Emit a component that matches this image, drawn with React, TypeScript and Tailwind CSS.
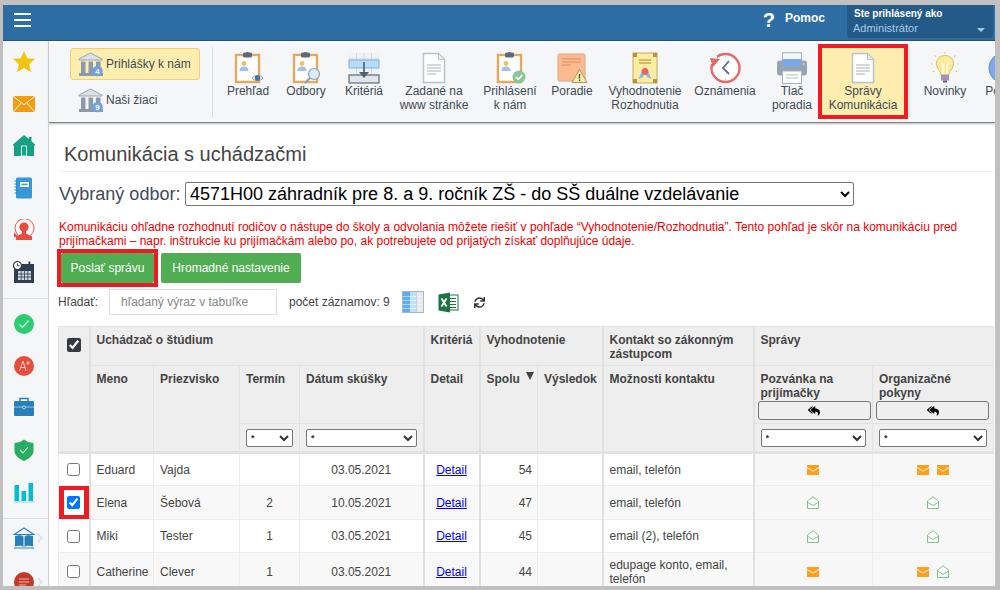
import type { ReactNode } from "react";
import { FaReplyAll, FaSync } from "react-icons/fa";

const font = "font-['Liberation_Sans',Arial,sans-serif]";

/* ---------- toolbar icons ---------- */

function Clipboard({ children }: { children?: ReactNode }) {
  return (
    <svg width="32" height="32" viewBox="0 0 32 32">
      <rect x="4" y="3" width="23" height="27" fill="#fff" stroke="#e3a862" strokeWidth="2.4" />
      <rect x="11" y="0.5" width="9" height="5" rx="1.5" fill="#5c6a7a" />
      <circle cx="15.5" cy="1.5" r="1.4" fill="#5c6a7a" />
      <circle cx="12" cy="11.5" r="2.4" fill="#f3c25f" />
      <path d="M7.5 19c0-3.5 2-4.6 4.5-4.6s4.5 1.1 4.5 4.6z" fill="#9cc4ef" />
      {children}
    </svg>
  );
}

function Page() {
  return (
    <svg width="32" height="32" viewBox="0 0 32 32">
      <path d="M5.5 1.5h15l6 6v23h-21z" fill="#fff" stroke="#b9c3cd" strokeWidth="1.5" />
      <path d="M20.5 1.5v6h6z" fill="#e8ecf0" stroke="#b9c3cd" strokeWidth="1" />
      <path d="M9 13h14M9 16h14M9 19h14M9 22h9" stroke="#a9b2bb" strokeWidth="1.2" />
    </svg>
  );
}

function Kriteria() {
  return (
    <svg width="32" height="32" viewBox="0 0 32 32">
      <rect x="1" y="1" width="30" height="30" fill="#eef2f5" />
      <path d="M1 7h30M8.5 1v30M16 1v30M23.5 1v30" stroke="#cfd7de" strokeWidth="1" />
      <rect x="1" y="8" width="30" height="8" fill="#b5dcfb" stroke="#8db0cf" />
      <rect x="1" y="23" width="30" height="8" fill="#dfe6ec" stroke="#5f6c78" strokeWidth="1.2" />
      <path d="M16 10v14" stroke="#515d69" strokeWidth="1.6" />
      <path d="M11 20h10l-5 6z" fill="#515d69" />
    </svg>
  );
}

function Poradie() {
  return (
    <svg width="32" height="32" viewBox="0 0 32 32">
      <rect x="2" y="2" width="27" height="27" rx="1.5" fill="#fdb98f" stroke="#e0a484" />
      <path d="M6 7h19M6 10h19M6 13h9" stroke="#d98d5f" strokeWidth="1.2" />
      <path d="M23.5 17.5l7.5 13H16z" fill="#fdeeb0" stroke="#a7975c" />
      <path d="M23.5 22v4.5M23.5 27.5v1.4" stroke="#4d4a3d" strokeWidth="1.4" />
    </svg>
  );
}

function Certificate() {
  return (
    <svg width="32" height="32" viewBox="0 0 32 32">
      <rect x="4" y="1" width="24" height="30" fill="#fdeda3" stroke="#c6a862" />
      <path d="M4 1h4v4H4zM24 1h4v4h-4zM4 27h4v4H4zM24 27h4v4h-4z" fill="#b89344" />
      <path d="M10 8h12M10 11h12" stroke="#c9a94f" strokeWidth="1.3" />
      <path d="M12.5 20l-3 7 4-1.5 2.5-4zM19.5 20l3 7-4-1.5-2.5-4z" fill="#8db9e8" />
      <circle cx="16" cy="19.5" r="3.4" fill="#e8656a" />
    </svg>
  );
}

function ClockBack() {
  return (
    <svg width="32" height="32" viewBox="0 0 32 32">
      <circle cx="16.5" cy="16" r="14" fill="#fff" stroke="#e36a6a" strokeWidth="2.4" />
      <rect x="1" y="4" width="7" height="8" fill="#f4f6f8" />
      <path d="M1 6l10 1-7 8z" fill="#e36a6a" />
      <path d="M20 9l-6 7 6 6" fill="none" stroke="#5d6f82" strokeWidth="1.8" />
      <path d="M16.5 4v1.5M16.5 26.5V28M27 16h1.5" stroke="#c8cfd6" strokeWidth="1" />
    </svg>
  );
}

function Printer() {
  return (
    <svg width="32" height="32" viewBox="0 0 32 32">
      <rect x="6.5" y="0.7" width="19" height="10" fill="#f4f6f8" stroke="#a7b2bd" />
      <rect x="1" y="8.5" width="30" height="15" rx="3" fill="#96a4b2" />
      <rect x="6.5" y="7" width="19" height="7" rx="1" fill="#7aa8e8" />
      <rect x="6.5" y="19" width="19" height="12.5" fill="#fff" stroke="#a7b2bd" />
      <path d="M10 23h12M10 26h12" stroke="#b5bec7" strokeWidth="1.1" />
      <circle cx="27.5" cy="12" r="1" fill="#f3d28a" />
    </svg>
  );
}

function Bulb() {
  return (
    <svg width="32" height="32" viewBox="0 0 32 32">
      <path d="M16 3.5c-5.2 0-8.6 3.8-8.6 8.2 0 4.4 3.9 6.6 4.6 11h8c.7-4.4 4.6-6.6 4.6-11 0-4.4-3.4-8.2-8.6-8.2z" fill="#fdeb9b" stroke="#d9bf63" />
      <path d="M14 22V13l-2-2M18 22V13l2-2" fill="none" stroke="#fff" strokeWidth="1.3" />
      <rect x="12" y="23" width="8" height="5.5" fill="#a68fc4" />
      <rect x="14" y="28.5" width="4" height="2" fill="#6a5a82" />
      <path d="M16 0v1.6M5.5 3.5l1.2 1.2M26.5 3.5l-1.2 1.2M2 12h1.6M28.4 12H30M4 20l1.2-1M28 20l-1.2-1" stroke="#dcc56d" strokeWidth="1.1" />
    </svg>
  );
}

function RoundBlue() {
  return (
    <svg width="32" height="32" viewBox="0 0 32 32">
      <circle cx="16" cy="16" r="15" fill="#7fa9e8" stroke="#5f88c4" />
    </svg>
  );
}

function Bank({ count }: { count: number }) {
  return (
    <svg width="26" height="25" viewBox="0 0 26 25" className="shrink-0">
      <path d="M12.5 1L24 7v1H1V7z" fill="#dbe1e7" stroke="#9aa7b4" />
      <path d="M3 9.500h4.500V21H3zM10.500 9.500H15V21h-4.500zM18 9.500h4.500V21H18z" fill="#8c99a7" />
      <rect x="1" y="21" width="24" height="3" fill="#8c99a7" />
      <circle cx="19.500" cy="19" r="5.200" fill="#6f9fe6" />
      <text x="19.500" y="21.800" textAnchor="middle" fontSize="8" fontWeight="700" fill="#fff" fontFamily="Liberation Sans">
        {count}
      </text>
    </svg>
  );
}

function TableCols() {
  return (
    <svg width="22" height="22" viewBox="0 0 22 22">
      <rect x="0.5" y="0.5" width="21" height="21" fill="#e7ecf0" stroke="#a9b6c2" />
      <rect x="1" y="1" width="7" height="20" fill="#5aaef5" />
      <rect x="8" y="1" width="6" height="20" fill="#bfe0fb" />
      <path d="M1 5.500h20M1 9.500h20M1 13.500h20M1 17.500h20" stroke="#fff" strokeWidth="0.7" opacity="0.7" />
      <path d="M14.500 1v20" stroke="#c6d0d8" />
    </svg>
  );
}

function Excel() {
  return (
    <svg width="21" height="21" viewBox="0 0 21 21">
      <rect x="10" y="3" width="10" height="15" fill="#fff" stroke="#217346" />
      <path d="M12 6.500h6M12 9.500h6M12 12.500h6M12 15.500h6" stroke="#217346" strokeWidth="1.2" />
      <path d="M0.500 2.500L12 0.500v20l-11.500-2z" fill="#217346" />
      <path d="M3.500 6.500l5 8M8.500 6.500l-5 8" stroke="#fff" strokeWidth="1.7" />
    </svg>
  );
}

/* ---------- sidebar icons ---------- */

const sideTop = [
  <path key="star" d="M11 0l3.300 7.300 7.700.8-5.800 5.200 1.700 7.800L11 17.100l-6.900 4 1.700-7.800L0 8.100l7.700-.8z" fill="#f1c40f" />,
  <g key="mail">
    <rect y="3" width="22" height="16" fill="#f39c12" />
    <path d="M0 3l11 9 11-9M0 19l8-9M22 19l-8-9" fill="none" stroke="#fff" strokeWidth="0.9" />
  </g>,
  <g key="home">
    <path d="M11 0l5 4V2h2.500v4.200L22 9.500v1.200h-1V21H1V10.700H0V9.500z" fill="#16a085" />
    <rect x="8.500" y="11" width="5" height="10" fill="#16a085" stroke="#d5f3ec" />
  </g>,
  <g key="notebook">
    <rect x="3" y="0.500" width="16" height="21" rx="1.500" fill="#3498db" />
    <rect x="7" y="5" width="9" height="5" fill="#fff" />
    <rect x="8.500" y="6.700" width="6" height="1.400" fill="#3498db" />
    <path d="M1.500 4h3M1.500 7h3M1.500 10h3M1.500 13h3M1.500 16h3" stroke="#2c7fb8" strokeWidth="1" />
  </g>,
  <g key="person">
    <path d="M5 16A9.500 9.500 0 1 1 17.500 16.500" fill="none" stroke="#e74c3c" strokeWidth="0.9" />
    <circle cx="11" cy="8" r="4.600" fill="#e74c3c" />
    <path d="M9 12h4v2.500l6 3V21H3v-3.500l6-3z" fill="#e74c3c" />
    <path d="M1 13.500l4 3.500-4 1.500z" fill="#e74c3c" />
  </g>,
  <g key="calendar">
    <rect x="1" y="3" width="20" height="19" fill="#2c3e50" />
    <rect x="5" y="10" width="13" height="9" fill="#cfd6dc" />
    <path d="M5 13h13M5 16h13M8.200 10v9M11.500 10v9M14.800 10v9" stroke="#2c3e50" strokeWidth="0.8" />
    <rect x="15.500" y="0.500" width="1.800" height="4.500" fill="#2c3e50" />
    <circle cx="4.500" cy="4.500" r="4" fill="#fff" stroke="#2c3e50" strokeWidth="1.200" />
    <path d="M4.500 2.500v2.200h2" fill="none" stroke="#2c3e50" strokeWidth="0.900" />
  </g>,
];

const sideMid = [
  <g key="check">
    <circle cx="11" cy="11" r="10" fill="#2ecc71" />
    <path d="M6.500 11.500l3 3 6-7" fill="none" stroke="#d9f7e6" strokeWidth="1.200" />
  </g>,
  <g key="grade">
    <circle cx="11" cy="11" r="10" fill="#e74c3c" />
    <path d="M6.500 16L10 6l3 10M7.700 12.500h4.600M15 6v4M13 8h4" fill="none" stroke="#fbdad6" strokeWidth="0.900" />
  </g>,
  <g key="case">
    <path d="M7 4V1.500h8V4" fill="none" stroke="#2980b9" strokeWidth="1.500" />
    <rect x="1" y="4" width="20" height="15" rx="1" fill="#2980b9" />
    <path d="M1 10h20" stroke="#a5cde8" strokeWidth="0.900" />
    <circle cx="11" cy="10.500" r="1.500" fill="#2980b9" stroke="#d2e6f3" strokeWidth="0.800" />
  </g>,
  <g key="shield">
    <path d="M11 0.500l4 2.500 5.500 1V12c0 4.500-5 8-9.500 10C6.500 20 1.500 16.500 1.500 12V4L7 3z" fill="#27ae60" />
    <path d="M7 11l3 3 5-6" fill="none" stroke="#d9f7e6" strokeWidth="1.100" />
  </g>,
  <g key="bars">
    <rect x="1.500" y="4" width="4.500" height="16" fill="#00bcd4" />
    <rect x="8.500" y="10" width="4.500" height="10" fill="#00bcd4" />
    <rect x="15.500" y="2" width="4.500" height="18" fill="#00bcd4" />
    <path d="M0.500 21h21" stroke="#7fdde9" />
  </g>,
];

function SideIcon({ children, chevron }: { children: ReactNode; chevron?: boolean }) {
  return (
    <div className="relative flex h-full items-center pl-[10px]">
      <svg width="22" height="22" viewBox="0 0 22 22">
        {children}
      </svg>
      {chevron && (
        <svg width="6" height="10" viewBox="0 0 6 10" className="absolute right-[5px] top-1/2 -translate-y-1/2">
          <path d="M1 1l4 4-4 4" fill="none" stroke="#d6d6d6" strokeWidth="1.200" />
        </svg>
      )}
    </div>
  );
}

function Sidebar() {
  return (
    <aside className="w-[46px] shrink-0 border-r border-[#cfcfcf] bg-[#f5f6f8]">
      <div className="border-b border-[#dfdfdf] pb-[5px]">
        {sideTop.map((icon, i) => (
          <div key={i} className="h-[42px]">
            <SideIcon>{icon}</SideIcon>
          </div>
        ))}
      </div>
      <div className="border-b border-[#dfdfdf] pb-[5px] pt-[4px]">
        {sideMid.map((icon, i) => (
          <div key={i} className="h-[42px]">
            <SideIcon>{icon}</SideIcon>
          </div>
        ))}
      </div>
      <div className="h-[38px]">
        <SideIcon chevron>
          <path d="M11 1L1 7.500h20z" fill="none" stroke="#2980b9" strokeWidth="1.100" />
          <path d="M2 9c3-1 7-1 8.500.5V20C9 18.500 5 18.500 2 19.500zM20 9c-3-1-7-1-8.500.5V20c1.500-1.500 5.500-1.500 8.500-.5z" fill="#2980b9" />
          <path d="M1 21h20" stroke="#2980b9" />
        </SideIcon>
      </div>
      <div className="mt-[4px] h-[42px]">
        <SideIcon chevron>
          <circle cx="11" cy="11" r="10" fill="#c0392b" />
          <path d="M6 8h10M6 11h10M6 14h7" stroke="#eab5ae" strokeWidth="1.200" />
        </SideIcon>
      </div>
    </aside>
  );
}

/* ---------- toolbar ---------- */

const tools = [
  {
    lines: ["Prehľad"],
    w: "w-[60px]",
    icon: (
      <Clipboard>
        <path d="M20 26c2.500-3.500 8.500-3.500 11 0-2.500 3.500-8.500 3.500-11 0z" fill="#fff" stroke="#7d8b99" strokeWidth="0.800" />
        <circle cx="25.500" cy="26" r="2.800" fill="#3f77ad" />
      </Clipboard>
    ),
  },
  {
    lines: ["Odbory"],
    w: "w-[56px]",
    icon: (
      <Clipboard>
        <circle cx="24" cy="22" r="5.500" fill="#d9eefc" stroke="#8aa0b4" strokeWidth="1.200" />
        <path d="M20 26l-5 5" stroke="#8aa0b4" strokeWidth="2.200" />
      </Clipboard>
    ),
  },
  { lines: ["Kritériá"], w: "w-[60px]", icon: <Kriteria /> },
  { lines: ["Zadané na", "www stránke"], w: "w-[80px]", icon: <Page /> },
  {
    lines: ["Prihlásení", "k nám"],
    w: "w-[72px]",
    icon: (
      <Clipboard>
        <circle cx="25" cy="25" r="6.500" fill="#8cc49a" />
        <path d="M22 25l2.300 2.300 4-4.300" fill="none" stroke="#fff" strokeWidth="1.600" />
      </Clipboard>
    ),
  },
  { lines: ["Poradie"], w: "w-[52px]", icon: <Poradie /> },
  { lines: ["Vyhodnotenie", "Rozhodnutia"], w: "w-[94px]", icon: <Certificate /> },
  { lines: ["Oznámenia"], w: "w-[66px]", icon: <ClockBack /> },
  { lines: ["Tlač", "poradia"], w: "ml-[8px] w-[52px]", icon: <Printer /> },
  { lines: ["Správy", "Komunikácia"], w: "w-[90px]", active: true, icon: <Page /> },
  { lines: ["Novinky"], w: "ml-[13px] w-[58px]", divider: true, icon: <Bulb /> },
  { lines: ["Pomoc"], w: "w-[60px]", icon: <RoundBlue /> },
];

function Toolbar() {
  return (
    <div className="mt-[2px] flex h-[80px] shrink-0 overflow-hidden border-b border-[#808080] bg-[#f4f6f8] text-[12px] leading-[14px] text-[#3f4a56] shadow-[0_1px_2px_#bbb]">
      <div className="ml-[21px] mt-[5px] flex w-[130px] shrink-0 flex-col gap-[4px]">
        <div className="flex h-[32px] items-center gap-[2px] rounded-[3px] border border-[#f5cf6b] bg-[#fdeeb0] pl-[7px]">
          <Bank count={4} />
          <span>Prihlášky k nám</span>
        </div>
        <div className="flex h-[32px] items-center gap-[2px] border border-transparent pl-[7px]">
          <Bank count={9} />
          <span>Naši žiaci</span>
        </div>
      </div>
      <div className="ml-[12px] mr-[5px] mt-[4px] h-[70px] w-px shrink-0 bg-[#dcdcdc]" />
      {tools.map((t) => (
        <div key={t.lines[0]} className="contents">
          {t.divider && <div className="ml-[1px] mr-[-7px] mt-[4px] h-[70px] w-px shrink-0 bg-[#e2e2e2]" />}
          <div
            className={`mt-[1px] flex h-[75px] shrink-0 flex-col items-center whitespace-nowrap border-4 pt-[4px] text-center ${t.w} ${
              t.active ? "border-[#ed1c24] bg-[#fdeeb0]" : "border-transparent"
            }`}
          >
            <div className="flex h-[32px] justify-center">{t.icon}</div>
            {t.lines.map((l) => (
              <div key={l}>{l}</div>
            ))}
          </div>
        </div>
      ))}
    </div>
  );
}

/* ---------- table ---------- */

const th = "border border-[#e2e2e2] bg-[#eeeeee] px-[6px] pt-[6px] text-left align-top font-bold text-[#444]";
const selectCell = "border border-[#e2e2e2] border-b-[3px] bg-[#eeeeee] px-[6px] align-middle";
const td = "border border-[#ececec] px-[6px] text-[#444]";
const group = "border-r-2 border-r-[#e0e0e0]";

function MiniSelect() {
  return (
    <select className="block h-[18px] w-full rounded-[2px] border border-[#767676] bg-white text-[9px] text-[#333]">
      <option>*</option>
    </select>
  );
}

function ReplyButton() {
  return (
    <button className="-mx-[3px] mt-[1px] mb-[3px] flex h-[19px] w-[113px] items-center justify-center rounded-[3px] border border-[#767676] bg-[#efefef] text-black">
      <FaReplyAll size={12} />
    </button>
  );
}

function Closed() {
  return (
    <svg width="12" height="10" viewBox="0 0 12 10">
      <rect width="12" height="10" fill="#ff9f1c" />
      <path d="M0 2.500l6 3.500 6-3.500" fill="none" stroke="#fff" strokeWidth="0.900" />
    </svg>
  );
}

function Opened() {
  return (
    <svg width="12" height="13" viewBox="0 0 12 13">
      <path d="M0.500 5L6 0.700 11.500 5v7.500H0.500z" fill="#fff" stroke="#6fbd7f" strokeWidth="0.900" />
      <path d="M1 6.500l5 3 5-3" fill="none" stroke="#6fbd7f" strokeWidth="0.900" />
    </svg>
  );
}

type Row = {
  meno: string;
  priezvisko: string;
  termin: string;
  datum: string;
  spolu: number;
  kontakt: string;
  pozvanka: ReactNode;
  pokyny: ReactNode;
  checked?: boolean;
  tall?: boolean;
};

const rows: Row[] = [
  { meno: "Eduard", priezvisko: "Vajda", termin: "", datum: "03.05.2021", spolu: 54, kontakt: "email, telefón", pozvanka: <Closed />, pokyny: <><Closed /><Closed /></> },
  { meno: "Elena", priezvisko: "Šebová", termin: "2", datum: "10.05.2021", spolu: 47, kontakt: "email, telefón", pozvanka: <Opened />, pokyny: <Opened />, checked: true },
  { meno: "Miki", priezvisko: "Tester", termin: "1", datum: "03.05.2021", spolu: 45, kontakt: "email (2), telefón", pozvanka: <Opened />, pokyny: <Opened /> },
  { meno: "Catherine", priezvisko: "Clever", termin: "1", datum: "03.05.2021", spolu: 44, kontakt: "edupage konto, email, telefón", pozvanka: <Closed />, pokyny: <><Closed /><Opened /></>, tall: true },
];

function ApplicantsTable() {
  return (
    <table className="-ml-px w-[935px] shrink-0 table-fixed border-collapse text-[12px] leading-[14px]">
      <colgroup>
        {[31, 64, 86, 60, 124, 56, 58, 65, 151, 119, 121].map((w, i) => (
          <col key={i} style={{ width: w }} />
        ))}
      </colgroup>
      <thead>
        <tr className="h-[39px]">
          <th rowSpan={3} className={`${th} ${group} border-b-[3px]`}>
            <div className="-mx-[6px] flex justify-center">
              <input type="checkbox" defaultChecked className="mt-[5px] h-[14px] w-[14px] accent-[#343a40]" />
            </div>
          </th>
          <th colSpan={4} className={`${th} ${group}`}>Uchádzač o štúdium</th>
          <th className={`${th} ${group}`}>Kritériá</th>
          <th colSpan={2} className={`${th} ${group}`}>Vyhodnotenie</th>
          <th className={`${th} ${group}`}>Kontakt so zákonným zástupcom</th>
          <th colSpan={2} className={th}>Správy</th>
        </tr>
        <tr className="h-[57px]">
          <th rowSpan={2} className={`${th} border-b-[3px]`}>Meno</th>
          <th rowSpan={2} className={`${th} border-b-[3px]`}>Priezvisko</th>
          <th className={th}>Termín</th>
          <th className={`${th} ${group}`}>Dátum skúšky</th>
          <th rowSpan={2} className={`${th} ${group} border-b-[3px]`}>Detail</th>
          <th rowSpan={2} className={`${th} border-b-[3px]`}>
            <div className="-mr-[3px] flex justify-between">
              <span>Spolu</span>
              <span className="h-0 w-0 border-x-[4.500px] border-t-[8px] border-x-transparent border-t-[#444]" />
            </div>
          </th>
          <th rowSpan={2} className={`${th} ${group} border-b-[3px]`}>Výsledok</th>
          <th rowSpan={2} className={`${th} ${group} border-b-[3px]`}>Možnosti kontaktu</th>
          <th className={th}>
            Pozvánka na prijímačky
            <ReplyButton />
          </th>
          <th className={th}>
            Organizačné pokyny
            <ReplyButton />
          </th>
        </tr>
        <tr className="h-[29px]">
          <th className={selectCell}><MiniSelect /></th>
          <th className={`${selectCell} ${group}`}><MiniSelect /></th>
          <th className={selectCell}><MiniSelect /></th>
          <th className={selectCell}><MiniSelect /></th>
        </tr>
      </thead>
      <tbody>
        {rows.map((r, i) => (
          <tr key={r.meno} className={`${r.tall ? "h-[38px]" : "h-[33px]"} ${i % 2 ? "bg-[#f8f8f8]" : "bg-white"}`}>
            <td className={`border border-[#ececec] p-0 ${group}`}>
              {r.checked ? (
                <div className="flex h-[33px] items-center justify-center border-x-[5px] border-y-4 border-[#ed1c24] bg-white">
                  <input type="checkbox" defaultChecked className="block" />
                </div>
              ) : (
                <div className="flex items-center justify-center">
                  <input type="checkbox" className="block" />
                </div>
              )}
            </td>
            <td className={td}>{r.meno}</td>
            <td className={td}>{r.priezvisko}</td>
            <td className={`${td} text-center`}>{r.termin}</td>
            <td className={`${td} ${group} text-center`}>{r.datum}</td>
            <td className={`${td} ${group} text-center`}>
              <a href="#detail" className="text-[#0000ee] underline">Detail</a>
            </td>
            <td className={`${td} pr-[5px] text-right`}>{r.spolu}</td>
            <td className={`${td} ${group}`} />
            <td className={`${td} ${group}`}>{r.kontakt}</td>
            <td className={`${td} bg-[#f7f7f7]`}>
              <div className="flex items-center justify-center gap-2">{r.pozvanka}</div>
            </td>
            <td className={`${td} bg-[#f7f7f7]`}>
              <div className="flex items-center justify-center gap-2">{r.pokyny}</div>
            </td>
          </tr>
        ))}
      </tbody>
    </table>
  );
}

/* ---------- page ---------- */

export default function App() {
  return (
    <div className={`h-[590px] w-[1000px] overflow-hidden bg-[#c0c0c0] pl-[3px] pt-[5px] ${font}`}>
      <div className="flex h-[581px] w-[992px] flex-col overflow-hidden bg-white">
        <header className="flex h-[36px] shrink-0 items-start border-b border-[#1c5582] bg-[#2d6da3] text-white">
          <div className="ml-[11px] mt-[8px] flex w-[17px] flex-col gap-[4px]">
            <span className="h-[2px] bg-white" />
            <span className="h-[2px] bg-white" />
            <span className="h-[2px] bg-white" />
          </div>
          <div className="ml-auto mt-[4px] flex items-center">
            <span className="text-[20px] font-bold leading-[22px]">?</span>
            <span className="mb-[4px] ml-[10px] text-[12px] font-bold">Pomoc</span>
          </div>
          <div className="relative ml-[22px] mr-[2px] h-[33px] w-[146px] rounded-b-[3px] bg-[#235a87] pl-[7px] pt-[2px]">
            <div className="text-[10px] font-bold leading-[14px]">Ste prihlásený ako</div>
            <div className="-ml-px text-[11px] leading-[14px] text-[#a5cbeb]">Administrátor</div>
            <span className="absolute bottom-[6px] right-[8px] h-0 w-0 border-x-[4px] border-t-[4px] border-x-transparent border-t-[#a5cbeb]" />
          </div>
        </header>
        <div className="flex min-h-0 flex-1">
          <Sidebar />
          <main className="flex min-w-0 flex-1 flex-col">
            <Toolbar />
            <div className="flex min-h-0 flex-1 flex-col pl-[10px] pr-[2px]">
              <h1 className="h-[49px] shrink-0 border-b border-[#eeeeee] pl-[5px] pt-[19px] text-[20px] font-normal leading-[24px] text-[#444]">
                Komunikácia s uchádzačmi
              </h1>
              <div className="mt-[10px] flex h-[24px] shrink-0 items-center text-[18px] text-[#3f4a56]">
                <span className="w-[126px] whitespace-nowrap">Vybraný odbor:</span>
                <select className="h-[24px] w-[669px] rounded-[2px] border border-[#767676] bg-white text-[18px] text-black">
                  <option>4571H00 záhradník pre 8. a 9. ročník ZŠ - do SŠ duálne vzdelávanie</option>
                </select>
              </div>
              <p className="mt-[14px] shrink-0 whitespace-nowrap text-[12px] leading-[14px] text-[#f00000]">
                Komunikáciu ohľadne rozhodnutí rodičov o nástupe do školy a odvolania môžete riešiť v pohľade “Vyhodnotenie/Rozhodnutia”. Tento pohľad je skôr na komunikáciu pred
                <br />
                prijímačkami – napr. inštrukcie ku prijímačkám alebo po, ak potrebujete od prijatých získať doplňujúce údaje.
              </p>
              <div className="-ml-[2px] mt-[1px] flex shrink-0 items-center text-[12px] text-white">
                <div className="border-4 border-[#ed1c24]">
                  <button className="block h-[30px] w-[93px] rounded-[2px] bg-[#51ad54]">Poslať správu</button>
                </div>
                <button className="ml-[3px] h-[30px] w-[140px] rounded-[2px] bg-[#51ad54]">Hromadné nastavenie</button>
              </div>
              <div className="-ml-px mt-[2px] flex h-[26px] shrink-0 items-center text-[12px] text-[#444]">
                <span className="w-[51px]">Hľadať:</span>
                <input
                  placeholder="hľadaný výraz v tabuľke"
                  className="h-[26px] w-[168px] border border-[#dddddd] pl-[11px] text-[12px] placeholder:text-[#888]"
                />
                <span className="ml-[12px] w-[113px] whitespace-nowrap">počet záznamov: 9</span>
                <TableCols />
                <span className="ml-[14px]"><Excel /></span>
                <FaSync size={11} className="ml-[15px] text-[#333]" />
              </div>
              <div className="mt-[11px] shrink-0">
                <ApplicantsTable />
              </div>
            </div>
          </main>
        </div>
      </div>
    </div>
  );
}
